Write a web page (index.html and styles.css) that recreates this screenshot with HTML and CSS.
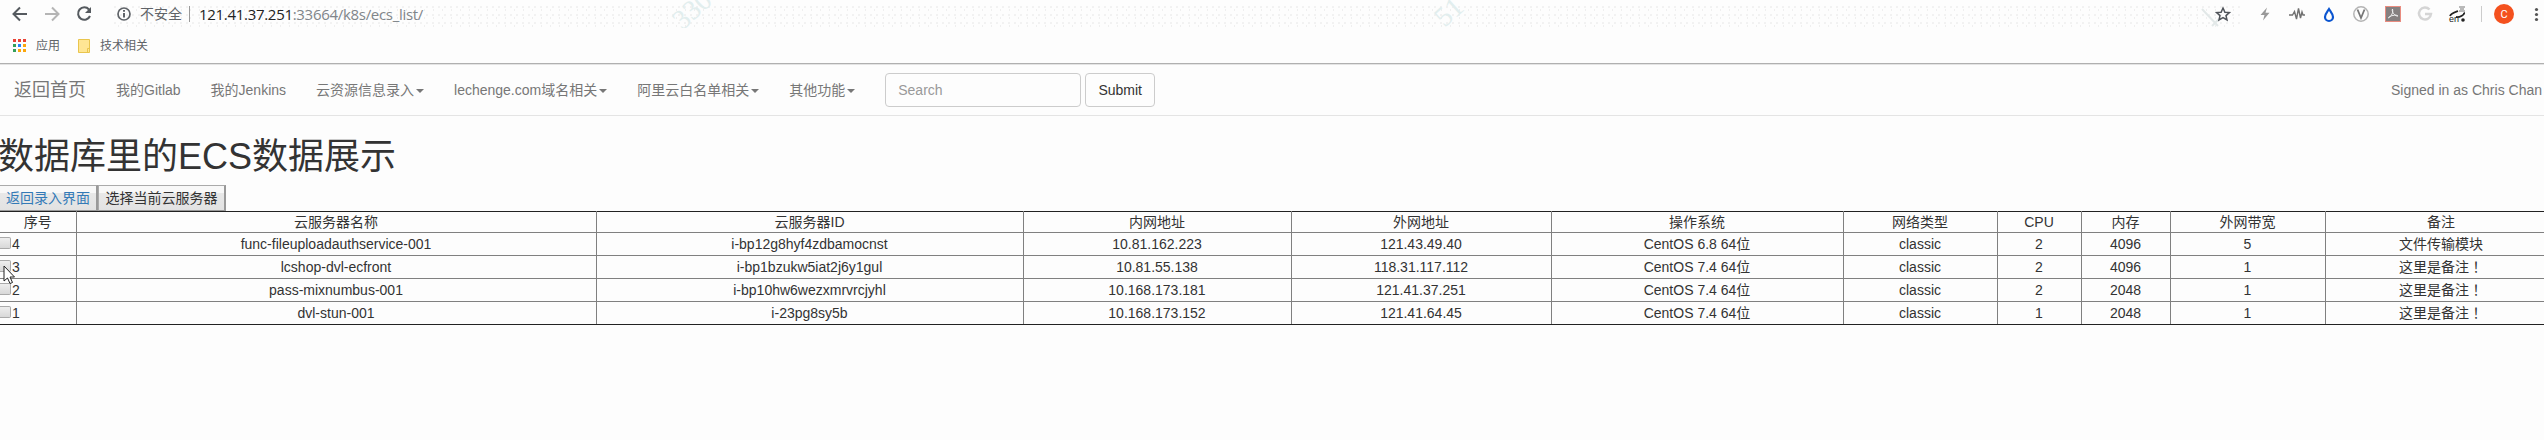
FILE: index.html
```html
<!DOCTYPE html>
<html lang="zh-CN">
<head>
<meta charset="utf-8">
<title>ECS</title>
<link rel="stylesheet" href="styles.css">
</head>
<body>
<header class="browser">
  <div class="toolbar">
    <span class="watermark wm-a">330</span><span class="watermark wm-b">51</span>
    <svg class="nav-icons" width="132" height="28" viewBox="0 0 132 28" fill="none" stroke-width="2">
      <path d="M27 14H14M20 7.5L13.500 14L20 20.500" stroke="#555a5f"/>
      <path d="M45 14H58M52 7.500L58.500 14L52 20.500" stroke="#b5b5b5"/>
      <path d="M89 9.500A6.200 6.200 0 1 0 90 16" stroke="#555a5f"/><path d="M91 7V13H85Z" fill="#555a5f"/>
      <circle cx="124" cy="14" r="6" stroke="#5f6368" stroke-width="1.700"/><path d="M124 13V17.500M124 10V11.800" stroke="#5f6368"/>
    </svg>
    <span class="unsafe">不安全</span><span class="divider"></span>
    <span class="url"><b>121.41.37.251</b>:33664/k8s/ecs_list/</span>
    <svg class="extensions" width="344" height="28" viewBox="2200 0 344 28" fill="none">
      <path d="M2202 9L2218 26M2212 26L2219 19" stroke="#e2e8e8" stroke-width="2"/>
      <path d="M2223 8L2224.900 12.200L2229.400 12.600L2226 15.600L2227 20L2223 17.700L2219 20L2220 15.600L2216.600 12.600L2221.100 12.200Z" stroke="#50545a" stroke-width="1.500"/>
      <path d="M2267 7.500L2260.500 15H2264.500L2263 20.500L2269.500 12.800H2265.500Z" fill="#999"/>
      <path d="M2289 15H2292.500L2294.500 11.500L2296.500 19L2298.500 8.500L2300.500 18L2302 12L2303 15H2305" stroke="#707070" stroke-width="1.400"/>
      <path d="M2329 9C2327 12 2325 14 2325 17A4 4 0 0 0 2333 17C2333 14 2331 12 2329 9Z" stroke="#0b55d0" stroke-width="2.200"/>
      <circle cx="2361" cy="14" r="7.200" stroke="#b4b4b4" stroke-width="1.500"/><path d="M2357.500 9.500L2361 18L2364.500 9.500" stroke="#777" stroke-width="1.800"/>
      <rect x="2385.500" y="6.500" width="15" height="15" fill="#858080" stroke="#e98c80"/><path d="M2392.500 9C2394 14 2389 18 2388.500 18C2388 16 2397 14 2398 16C2397 17 2391 13 2392.500 9Z" stroke="#eee" stroke-width="1"/>
      <path d="M2429.500 9.500A6 6 0 1 0 2431 14H2425" stroke="#d5d5d5" stroke-width="2.500"/>
      <path d="M2450 16C2451 13 2455 12 2458 11M2456 17C2460 17.500 2465 14.500 2464 12.500" stroke="#222" stroke-width="1.800"/><path d="M2459 7H2465M2460 9H2464M2459 11H2465" stroke="#777"/><circle cx="2463" cy="20" r="1.800" fill="#222"/><text x="2449" y="22" class="en">en</text>
      <path d="M2481.500 6V22" stroke="#ccc"/>
      <circle cx="2504" cy="14" r="10" fill="#f4511e"/><text x="2504" y="18" class="avatar">C</text>
      <g fill="#555"><circle cx="2536.500" cy="9.500" r="1.600"/><circle cx="2536.500" cy="14.500" r="1.600"/><circle cx="2536.500" cy="19.500" r="1.600"/></g>
    </svg>
  </div>
  <div class="bookmarks">
    <svg width="13" height="13" viewBox="0 0 13 13"><path fill="#ea4335" d="M0 0h3v3H0zM5 0h3v3H5zM10 0h3v3h-3z"/><path fill="#34a05a" d="M0 5h3v3H0zM0 10h3v3H0z"/><path fill="#2684fc" d="M5 5h3v3H5z"/><path fill="#fba70d" d="M10 5h3v3h-3zM5 10h3v3H5zM10 10h3v3h-3z"/></svg>
    <span class="apps">应用</span>
    <svg width="12" height="14" viewBox="0 0 12 14"><path d="M.5.500h11v13H.5z" fill="#ffe694" stroke="#e9c54d"/><path d="M9.500 13V9.500h2" fill="none" stroke="#e9c54d"/></svg>
    <span class="folder">技术相关</span>
  </div>
</header>
<nav class="navbar">
  <a class="brand">返回首页</a>
  <a>我的Gitlab</a><a>我的Jenkins</a>
  <a>云资源信息录入<i class="caret"></i></a><a>lechenge.com域名相关<i class="caret"></i></a><a>阿里云白名单相关<i class="caret"></i></a><a>其他功能<i class="caret"></i></a>
  <input class="search" placeholder="Search"><button class="submit">Submit</button>
  <span class="signed">Signed in as Chris Chan</span>
</nav>
<main>
  <h1>数据库里的ECS数据展示</h1>
  <div class="actions"><button class="link">返回录入界面</button><button>选择当前云服务器</button></div>
  <table>
    <colgroup><col class="c1"><col class="c2"><col class="c3"><col class="c4"><col class="c5"><col class="c6"><col class="c7"><col class="c8"><col class="c9"><col class="c10"><col class="c11"></colgroup>
    <tr class="head"><td>序号</td><td>云服务器名称</td><td>云服务器ID</td><td>内网地址</td><td>外网地址</td><td>操作系统</td><td>网络类型</td><td>CPU</td><td>内存</td><td>外网带宽</td><td>备注</td></tr>
    <tr><td class="pick"><i class="check"></i>4</td><td>func-fileuploadauthservice-001</td><td>i-bp12g8hyf4zdbamocnst</td><td>10.81.162.223</td><td>121.43.49.40</td><td>CentOS 6.8 64位</td><td>classic</td><td>2</td><td>4096</td><td>5</td><td>文件传输模块</td></tr>
    <tr><td class="pick"><i class="check"></i>3</td><td>lcshop-dvl-ecfront</td><td>i-bp1bzukw5iat2j6y1gul</td><td>10.81.55.138</td><td>118.31.117.112</td><td>CentOS 7.4 64位</td><td>classic</td><td>2</td><td>4096</td><td>1</td><td>这里是备注<span class="mark" lang="zh-TW">！</span></td></tr>
    <tr><td class="pick"><i class="check"></i>2</td><td>pass-mixnumbus-001</td><td>i-bp10hw6wezxmrvrcjyhl</td><td>10.168.173.181</td><td>121.41.37.251</td><td>CentOS 7.4 64位</td><td>classic</td><td>2</td><td>2048</td><td>1</td><td>这里是备注<span class="mark" lang="zh-TW">！</span></td></tr>
    <tr><td class="pick"><i class="check"></i>1</td><td>dvl-stun-001</td><td>i-23pg8sy5b</td><td>10.168.173.152</td><td>121.41.64.45</td><td>CentOS 7.4 64位</td><td>classic</td><td>1</td><td>2048</td><td>1</td><td>这里是备注<span class="mark" lang="zh-TW">！</span></td></tr>
  </table>
</main>
<svg class="cursor" width="13" height="20" viewBox="0 0 13 20"><path d="M1 1V16L4.500 13L7 18.500L9.500 17.500L7 12H11.500Z" fill="#fff" stroke="#222"/></svg>
</body>
</html>
```
FILE: styles.css
```css
* { box-sizing: border-box; }
body { margin: 0; height: 440px; overflow: hidden; position: relative; background: #fdfdfd; color: #333; font: 14px/20px "Liberation Sans", "Noto Sans CJK SC", sans-serif; }
.browser { height: 64px; border-bottom: 1px solid #b0b0b0; }
.toolbar { height: 28px; display: flex; align-items: center; position: relative; overflow: hidden; white-space: nowrap; }
.toolbar::before { content: ""; position: absolute; left: 112px; right: 304px; top: 3px; height: 25px; background: radial-gradient(circle, #ececec 0.6px, transparent 0.9px) 0 0/6px 8px, radial-gradient(circle, #efefef 0.6px, transparent 0.9px) 2px 3px/9px 8px; }
.watermark { position: absolute; font: 28px/30px "Liberation Serif", serif; color: #e2eeee; transform: rotate(-42deg); }
.wm-a { left: 671px; top: -5px; }
.wm-b { left: 1435px; top: -3px; }
.nav-icons { position: relative; flex: none; }
.unsafe { position: relative; margin-left: 8px; width: 49px; color: #5f6368; }
.divider { position: relative; width: 1px; height: 16px; background: #999; }
.url { position: relative; margin-left: 9px; color: #80858a; font: 15px/20px "Open Sans", sans-serif; letter-spacing: -.3px; }
.url b { font-weight: 400; color: #222; }
.extensions { position: relative; flex: none; margin-left: auto; }
.en { font: 9px "Liberation Sans", sans-serif; fill: #222; }
.avatar { font: 11px Roboto, sans-serif; fill: #fff; text-anchor: middle; }
.bookmarks { display: flex; align-items: center; height: 35px; padding-left: 13px; font-size: 12px; color: #5f6368; }
.apps { margin: 0 18px 0 10px; width: 24px; }
.folder { margin-left: 10px; }
.navbar { height: 52px; display: flex; align-items: center; padding-left: 14px; border-top: 1px solid #e4e4e4; border-bottom: 1px solid #e4e4e4; color: #777; white-space: nowrap; }
.navbar a { margin-right: 30px; }
.navbar .brand { font-size: 18px; }
.caret { display: inline-block; margin-left: 2px; vertical-align: middle; border: 4px solid transparent; border-top-color: #777; border-bottom: 0; }
.search { width: 196px; height: 34px; padding: 6px 12px; border: 1px solid #ccc; border-radius: 4px; background: #fdfdfd; font: inherit; }
.search::placeholder { color: #999; opacity: 1; }
.submit { margin-left: 4px; width: 70px; height: 34px; padding: 0; border: 1px solid #ccc; border-radius: 4px; background: #fdfdfd; color: #333; font: inherit; }
.signed { margin-left: auto; padding-right: 2px; }
h1 { margin: 21px 0 9px -2px; font-size: 36px; font-weight: 400; line-height: 39px; white-space: nowrap; }
.actions { display: flex; height: 26px; }
.actions button { height: 26px; width: 128px; padding: 0; border: 1px solid #aaa; border-right: 2px solid #999; border-bottom-color: #999; background: linear-gradient(#f8f8f8 0 30%, #e8e8e8 30%, #e2e2e2); color: #333; font: inherit; line-height: 22px; }
.actions .link { width: 98px; border-left: 0; color: #337ab7; }
table { table-layout: fixed; width: 2557px; border-collapse: collapse; border: 1px solid #222; border-left: 0; }
td { padding: 0; height: 23px; border: 1px solid #808080; text-align: center; line-height: 20px; white-space: nowrap; overflow: hidden; }
table tr:first-child td { border-top-color: #222; }
table tr:last-child td { border-bottom-color: #222; }
td:first-child { border-left: 0; }
.head td { height: 21px; line-height: 18px; padding-bottom: 1px; }
td.pick { text-align: left; }
.mark { font-family: "Noto Sans CJK TC", sans-serif; line-height: 1; }
.check { display: inline-block; width: 11px; height: 12px; margin-right: 1px; border: 1px solid #aaa; border-left: 0; border-radius: 0 2px 2px 0; background: linear-gradient(#eee, #d8d8d8); }
.c1 { width: 76px; } .c2 { width: 520px; } .c3 { width: 427px; } .c4 { width: 268px; } .c5 { width: 260px; } .c6 { width: 292px; } .c7 { width: 154px; } .c8 { width: 84px; } .c9 { width: 89px; } .c10 { width: 155px; } .c11 { width: 232px; }
.cursor { position: absolute; left: 3px; top: 265px; }
```
